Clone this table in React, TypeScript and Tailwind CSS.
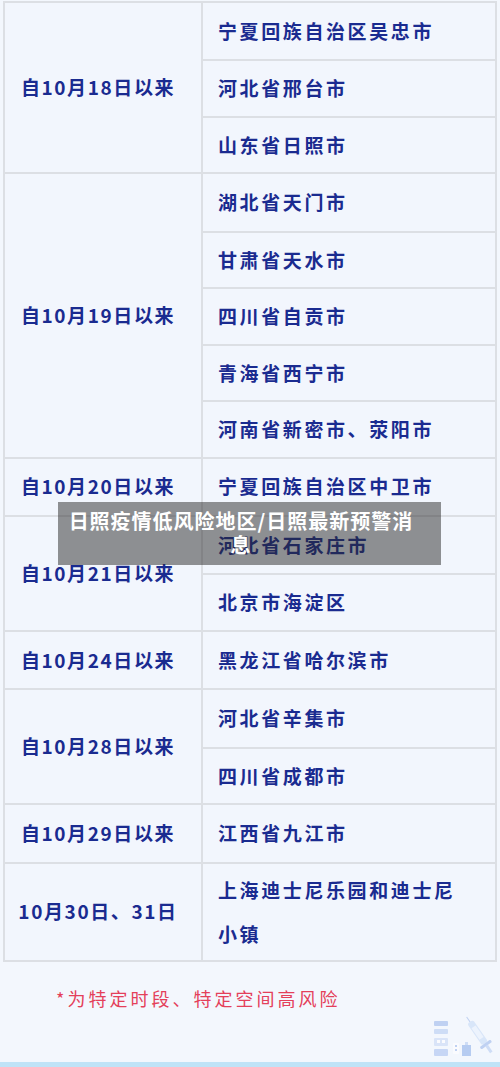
import React from "react";

type Group = { label: string; items: string[][]; tall?: boolean };

const groups: Group[] = [
  { label: "自10月18日以来", items: [["宁夏回族自治区吴忠市"], ["河北省邢台市"], ["山东省日照市"]] },
  {
    label: "自10月19日以来",
    items: [["湖北省天门市"], ["甘肃省天水市"], ["四川省自贡市"], ["青海省西宁市"], ["河南省新密市、荥阳市"]],
  },
  { label: "自10月20日以来", items: [["宁夏回族自治区中卫市"]] },
  { label: "自10月21日以来", items: [["河北省石家庄市"], ["北京市海淀区"]] },
  { label: "自10月24日以来", items: [["黑龙江省哈尔滨市"]] },
  { label: "自10月28日以来", items: [["河北省辛集市"], ["四川省成都市"]] },
  { label: "自10月29日以来", items: [["江西省九江市"]] },
  { label: "10月30日、31日", items: [["上海迪士尼乐园和迪士尼", "小镇"]], tall: true },
];

const font = { fontFamily: '"Noto Sans CJK SC", "Noto Sans", sans-serif' };

function Syringe() {
  return (
    <svg width="64" height="50" viewBox="0 0 64 50" className="opacity-60">
      <rect x="2" y="10" width="14" height="5" rx="1" fill="#9db8ec" />
      <rect x="2" y="18" width="14" height="5" rx="1" fill="#b7ccf3" />
      <rect x="2" y="27" width="14" height="8" rx="1" fill="#c8d8f6" />
      <rect x="5" y="29" width="3" height="3" fill="#ffffff" />
      <rect x="10" y="29" width="3" height="3" fill="#ffffff" />
      <rect x="2" y="38" width="14" height="7" rx="1" fill="#a9c1f0" />
      <rect x="21" y="32" width="6" height="11" rx="1" fill="#ffffff" />
      <rect x="23" y="34" width="2" height="2" fill="#9db8ec" />
      <rect x="23" y="38" width="2" height="2" fill="#9db8ec" />
      <path d="M30 34 h9 v11 h-9 z" fill="#8fb0ea" />
      <path d="M33 34 v-3 h3 v3" fill="#b7ccf3" />
      <g transform="rotate(-35 48 26)">
        <rect x="45" y="8" width="7" height="26" rx="2" fill="#c7dbf7" />
        <rect x="46" y="14" width="5" height="14" fill="#e9f1fd" />
        <rect x="42" y="34" width="13" height="3" rx="1" fill="#9db8ec" />
        <rect x="47" y="37" width="3" height="8" fill="#b7ccf3" />
        <rect x="48" y="2" width="1" height="6" fill="#9db8ec" />
      </g>
    </svg>
  );
}

export default function App() {
  return (
    <div className="relative w-[500px] h-[1067px] bg-[#f3f7fd] overflow-hidden" style={font}>
      <div className="pt-[1px] pl-[3px]">
        <div className="w-[494px] border-2 border-[#dcdfe4] bg-[#f2f6fd] text-[#1a2b90] font-bold">
          {groups.map((g, gi) => (
            <div key={gi} className={`flex ${gi > 0 ? "border-t-2 border-[#dcdfe4]" : ""}`}>
              <div className="w-[198px] shrink-0 border-r-2 border-[#dcdfe4] flex items-center justify-center pr-[10px]">
                <span className="text-[19px] tracking-[1.6px] whitespace-nowrap">{g.label}</span>
              </div>
              <div className="flex-1 flex flex-col">
                {g.items.map((it, ii) => (
                  <div
                    key={ii}
                    className={`${g.tall ? "h-[96px] leading-[44px]" : "h-[56.45px]"} flex flex-col justify-center pl-[15px] text-[19px] tracking-[2.6px] ${
                      ii > 0 ? "border-t-2 border-[#dcdfe4]" : ""
                    }`}
                  >
                    {it.map((line, li) => (
                      <div key={li} className="whitespace-nowrap">
                        {line}
                      </div>
                    ))}
                  </div>
                ))}
              </div>
            </div>
          ))}
        </div>
      </div>

      <div className="pl-[56px] pt-[24px] text-[18px] tracking-[3px] text-[#e4405a] leading-[24px]">
        *为特定时段、特定空间高风险
      </div>

      <div className="absolute right-[4px] bottom-[6px]">
        <Syringe />
      </div>
      <div className="absolute left-0 bottom-0 w-full h-[5px] bg-[#bfe3f7]" />

      <div className="absolute left-[58px] top-[502px] w-[383px] h-[63px] bg-[rgba(40,40,40,0.5)] pl-[10px] pr-[27px] pt-[7px] text-center text-white font-bold text-[20px] leading-[24px] tracking-[1px]">
        日照疫情低风险地区/日照最新预警消息
      </div>
    </div>
  );
}
